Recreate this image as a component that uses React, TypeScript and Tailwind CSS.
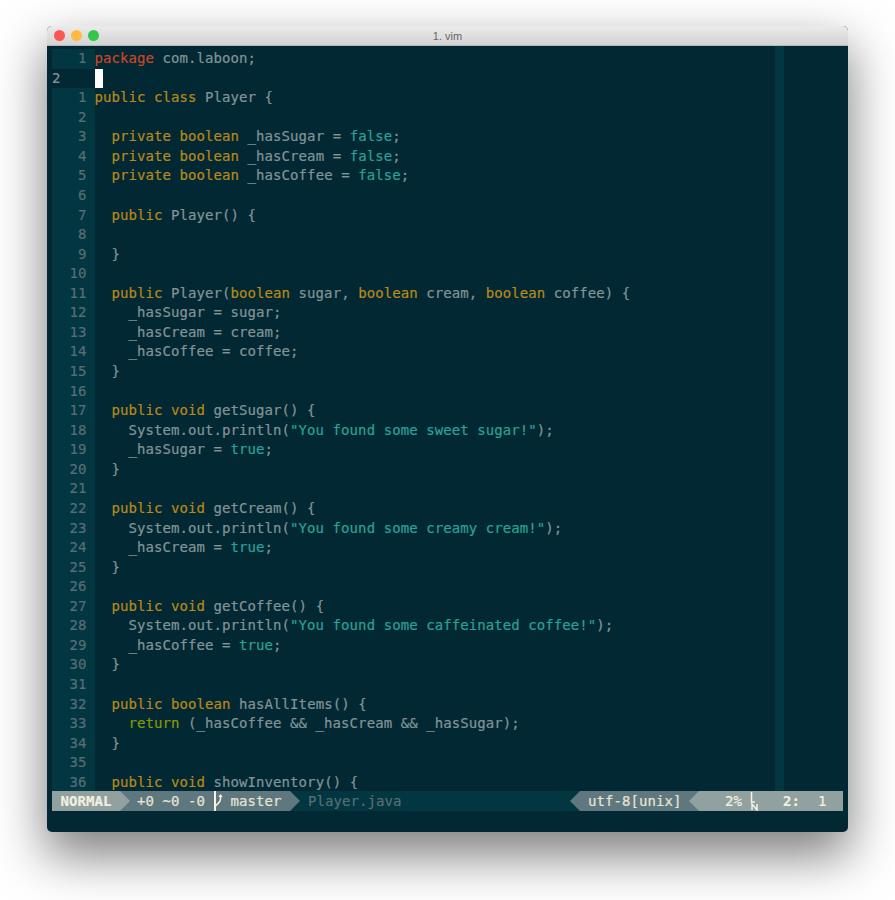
type Tok = [string, 'k' | 'r' | 't' | 's' | 'c' | 'g' | 'p'];

const K = (s: string): Tok => [s, 'k'];
const T = (s: string): Tok => [s, 't'];
const V = (s: string): Tok => [s, 'c'];
const G = (s: string): Tok => [s, 'g'];

const cls: Record<string, string> = {
  k: 'text-[#b8891a]',
  r: 'text-[#c9472b]',
  t: 'text-[#839496]',
  c: 'text-[#2aa198]',
  g: 'text-[#859900]',
};

const lines: Tok[][] = [
  [K('public'), T(' '), K('class'), T(' Player {')],
  [],
  [T('  '), K('private'), T(' '), K('boolean'), T(' _hasSugar = '), V('false'), T(';')],
  [T('  '), K('private'), T(' '), K('boolean'), T(' _hasCream = '), V('false'), T(';')],
  [T('  '), K('private'), T(' '), K('boolean'), T(' _hasCoffee = '), V('false'), T(';')],
  [],
  [T('  '), K('public'), T(' Player() {')],
  [],
  [T('  }')],
  [],
  [T('  '), K('public'), T(' Player('), K('boolean'), T(' sugar, '), K('boolean'), T(' cream, '), K('boolean'), T(' coffee) {')],
  [T('    _hasSugar = sugar;')],
  [T('    _hasCream = cream;')],
  [T('    _hasCoffee = coffee;')],
  [T('  }')],
  [],
  [T('  '), K('public'), T(' '), K('void'), T(' getSugar() {')],
  [T('    System.out.println('), V('"You found some sweet sugar!"'), T(');')],
  [T('    _hasSugar = '), V('true'), T(';')],
  [T('  }')],
  [],
  [T('  '), K('public'), T(' '), K('void'), T(' getCream() {')],
  [T('    System.out.println('), V('"You found some creamy cream!"'), T(');')],
  [T('    _hasCream = '), V('true'), T(';')],
  [T('  }')],
  [],
  [T('  '), K('public'), T(' '), K('void'), T(' getCoffee() {')],
  [T('    System.out.println('), V('"You found some caffeinated coffee!"'), T(');')],
  [T('    _hasCoffee = '), V('true'), T(';')],
  [T('  }')],
  [],
  [T('  '), K('public'), T(' '), K('boolean'), T(' hasAllItems() {')],
  [T('    '), G('return'), T(' (_hasCoffee && _hasCream && _hasSugar);')],
  [T('  }')],
  [],
  [T('  '), K('public'), T(' '), K('void'), T(' showInventory() {')],
];

function Row({ n, toks }: { n: number; toks: Tok[] }) {
  return (
    <div className="flex h-[19.57px] leading-[19.57px] whitespace-pre">
      <div className="w-[42.5px] shrink-0 bg-[#023640] pr-[8px] text-right text-[#586e75]">{n}</div>
      <div>
        {toks.map((t, i) => (
          <span key={i} className={cls[t[1]]}>
            {t[0]}
          </span>
        ))}
      </div>
    </div>
  );
}

function Right() {
  return (
    <svg width="10" height="20" viewBox="0 0 10 20" className="block shrink-0">
      <path d="M0 0 L10 10 L0 20 Z" fill="currentColor" />
    </svg>
  );
}

function Left() {
  return (
    <svg width="10" height="20" viewBox="0 0 10 20" className="block shrink-0">
      <path d="M10 0 L0 10 L10 20 Z" fill="currentColor" />
    </svg>
  );
}

export default function App() {
  return (
    <div className="h-[900px] w-[895px] overflow-hidden bg-white pl-[47px] pt-[26px]">
      <div className="relative flex h-[806px] w-[801px] flex-col overflow-hidden rounded-[5px] bg-[#012833] font-['DejaVu_Sans_Mono',monospace] text-[14px] tracking-[0.075px] shadow-[0_22px_50px_2px_rgba(0,0,0,0.5)] [-webkit-text-stroke:0.2px]">
        <div className="relative flex h-[20px] shrink-0 items-center justify-center border-b border-[#b4b8b6] bg-gradient-to-b from-[#ebebeb] to-[#d3d3d3] pt-[2px] font-['Liberation_Sans',sans-serif] text-[11px] tracking-normal text-[#666] [-webkit-text-stroke:0px]">
          1. vim
          <div className="absolute left-[7px] top-[4px] flex gap-[6px]">
            <span className="h-[11px] w-[11px] rounded-full bg-[#fc5753]" />
            <span className="h-[11px] w-[11px] rounded-full bg-[#fdbc40]" />
            <span className="h-[11px] w-[11px] rounded-full bg-[#33c748]" />
          </div>
        </div>

        <div className="relative mx-[5px] flex h-[745px] shrink-0 flex-col overflow-hidden pt-[3px]">
          <div className="absolute bottom-0 left-[723px] top-0 w-[9px] bg-[#023640]" />
          <div className="relative">
            <Row n={1} toks={[['package', 'r'], [' com.laboon;', 't']]} />
            <div className="flex h-[19.57px] leading-[19.57px]">
              <div className="w-[42.5px] shrink-0 text-[#839496]">2</div>
              <div className="h-[19.57px] w-[8.47px] bg-white" />
            </div>
            {lines.map((toks, i) => (
              <Row key={i} n={i + 1} toks={toks} />
            ))}
          </div>
        </div>

        <div className="mx-[5px] flex h-[20px] shrink-0 items-stretch whitespace-pre bg-[#023640] leading-[21px]">
          <div className="flex bg-[#5f787f]">
            <div className="w-[68px] bg-[#90a1a0] pl-[8.5px] font-bold text-[#f3efe0]">NORMAL</div>
            <div className="text-[#90a1a0]">
              <Right />
            </div>
          </div>
          <div className="flex bg-[#023640]">
            <div className="flex w-[160px] items-center bg-[#5f787f] pl-[7px] text-[#e8e4d4]">
              <span>+0 ~0 -0 </span>
              <svg width="10" height="20" viewBox="0 0 10 20" className="block shrink-0">
                <path d="M1 0V20" fill="none" stroke="#f7f3e3" strokeWidth="2" />
                <path d="M1.5 15C3 12.5 6.5 12 6.5 8V5" fill="none" stroke="#f7f3e3" strokeWidth="1.5" />
                <path d="M4.3 6 6.5 3 8.7 6Z" fill="#f7f3e3" />
              </svg>
              <span className="ml-[7px]">master</span>
            </div>
            <div className="text-[#5f787f]">
              <Right />
            </div>
          </div>
          <div className="ml-[8px] text-[#586e75]">Player.java</div>
          <div className="ml-auto flex">
            <div className="text-[#5f787f]">
              <Left />
            </div>
            <div className="w-[109px] bg-[#5f787f] pl-[8px] text-[#e8e4d4]">utf-8[unix]</div>
            <div className="bg-[#5f787f] text-[#90a1a0]">
              <Left />
            </div>
            <div className="flex w-[144px] bg-[#90a1a0] text-[#f3efe0]">
              <span className="ml-[26px]">2%</span>
              <svg width="9" height="20" viewBox="0 0 9 20" className="ml-[8px] block shrink-0">
                <path d="M1.5 1V11H5" fill="none" stroke="#f7f3e3" strokeWidth="1.5" />
                <path d="M2 19V13L7 19V13" fill="none" stroke="#f7f3e3" strokeWidth="1.5" />
              </svg>
              <span className="ml-[24px] font-bold">2:</span>
              <span className="ml-[18px]">1</span>
            </div>
          </div>
        </div>
      </div>
    </div>
  );
}
